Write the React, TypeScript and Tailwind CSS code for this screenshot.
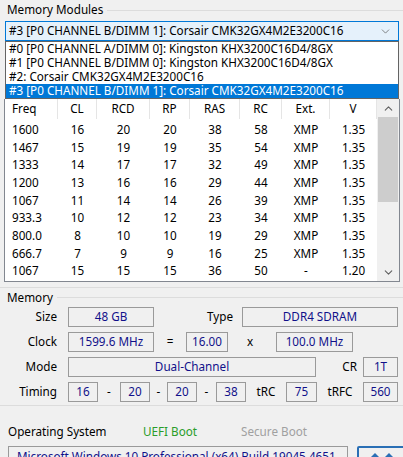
import { ChevronDown, ChevronUp } from 'lucide-react';

const modules = [
  '#0 [P0 CHANNEL A/DIMM 0]: Kingston KHX3200C16D4/8GX',
  '#1 [P0 CHANNEL B/DIMM 0]: Kingston KHX3200C16D4/8GX',
  '#2: Corsair CMK32GX4M2E3200C16',
  '#3 [P0 CHANNEL B/DIMM 1]: Corsair CMK32GX4M2E3200C16',
];

const cols = [
  { name: 'Freq', w: 'w-[53px]', left: true },
  { name: 'CL', w: 'w-[39px]' },
  { name: 'RCD', w: 'w-[53px]' },
  { name: 'RP', w: 'w-[40px]' },
  { name: 'RAS', w: 'w-[50px]' },
  { name: 'RC', w: 'w-[42px]' },
  { name: 'Ext.', w: 'w-[48px]' },
  { name: 'V', w: 'w-[47px]' },
];

const rows = [
  ['1600', '16', '20', '20', '38', '58', 'XMP', '1.35'],
  ['1467', '15', '19', '19', '35', '54', 'XMP', '1.35'],
  ['1333', '14', '17', '17', '32', '49', 'XMP', '1.35'],
  ['1200', '13', '16', '16', '29', '44', 'XMP', '1.35'],
  ['1067', '11', '14', '14', '26', '39', 'XMP', '1.35'],
  ['933.3', '10', '12', '12', '23', '34', 'XMP', '1.35'],
  ['800.0', '8', '10', '10', '19', '29', 'XMP', '1.35'],
  ['666.7', '7', '9', '9', '16', '25', 'XMP', '1.35'],
  ['1067', '15', '15', '15', '36', '50', '-', '1.20'],
];

function Field({ w, children }: { w: string; children: React.ReactNode }) {
  return (
    <div className={`${w} h-[20px] shrink-0 border border-[#9a9a9a] flex items-center justify-center text-[#10108a]`}>
      {children}
    </div>
  );
}

function GroupTitle({ title, h }: { title: string; h: string }) {
  return (
    <div className={`flex items-center ${h} pl-[7px]`}>
      <span>{title}</span>
      <div className="ml-[4px] flex-1 h-px bg-[#dcdcdc]" />
    </div>
  );
}

export default function App() {
  return (
    <div className="w-[403px] h-[457px] overflow-hidden bg-[#f0f0f0] font-['Noto_Sans',sans-serif] text-[11.7px] text-black leading-none whitespace-nowrap">
      <div className="pt-[1px] h-[21px]">
        <GroupTitle title="Memory Modules" h="h-[18px]" />
      </div>

      {/* combo box with open list */}
      <div className="ml-[5px] w-[394px] h-[20px] border border-[#0078d7] bg-[#e5f1fb] flex items-center justify-between pl-[3px] pr-[6px]">
        <span>#3 [P0 CHANNEL B/DIMM 1]: Corsair CMK32GX4M2E3200C16</span>
        <ChevronDown size={13} strokeWidth={1.25} className="text-[#505050]" />
      </div>
      <div className="ml-[5px] w-[394px] border border-[#646464] bg-white">
        {modules.map((m, i) => (
          <div
            key={m}
            className={`h-[14px] flex items-center pl-[3px] ${i === 3 ? 'bg-[#0078d7] text-white' : ''}`}
          >
            {m}
          </div>
        ))}
      </div>

      {/* timings list */}
      <div className="ml-[4px] w-[396px] h-[183px] border border-t-0 border-[#828790] bg-white flex">
        <div className="w-[372px]">
          <div className="flex h-[20px]">
            {cols.map((c) => (
              <div
                key={c.name}
                className={`${c.w} h-full border-r border-[#e5e5e5] flex items-center ${c.left ? 'pl-[7px]' : 'justify-center'}`}
              >
                {c.name}
              </div>
            ))}
          </div>
          <div className="pt-[2px]">
            {rows.map((r, ri) => (
              <div key={ri} className="flex h-[17.67px] items-center">
                {r.map((v, ci) => (
                  <div
                    key={ci}
                    className={`${cols[ci].w} flex ${ci === 0 ? 'pl-[7px]' : 'justify-center'}`}
                  >
                    {v}
                  </div>
                ))}
              </div>
            ))}
          </div>
        </div>
        <div className="w-[22px] bg-[#f0f0f0] flex flex-col">
          <div className="h-[18px] flex items-center justify-center">
            <ChevronUp size={13} strokeWidth={2} className="text-[#606060]" />
          </div>
          <div className="mx-[1px] h-[85px] bg-[#cdcdcd]" />
          <div className="flex-1" />
          <div className="h-[18px] flex items-center justify-center">
            <ChevronDown size={13} strokeWidth={2} className="text-[#606060]" />
          </div>
        </div>
      </div>

      <div className="mt-[5px] h-px bg-[#dcdcdc]" />

      <GroupTitle title="Memory" h="h-[19px]" />

      <div className="flex flex-col gap-[5px]">
        <div className="flex items-center">
          <div className="w-[57px] text-right">Size</div>
          <div className="w-[11px]" />
          <Field w="w-[86px]">48 GB</Field>
          <div className="w-[88px] text-right pr-[9px]">Type</div>
          <Field w="w-[156px]">DDR4 SDRAM</Field>
        </div>
        <div className="flex items-center">
          <div className="w-[57px] text-right">Clock</div>
          <div className="w-[11px]" />
          <Field w="w-[86px]">1599.6 MHz</Field>
          <div className="w-[32px] text-center">=</div>
          <Field w="w-[42px]">16.00</Field>
          <div className="w-[48px] text-center pr-[4px]">x</div>
          <Field w="w-[77px]">100.0 MHz</Field>
        </div>
        <div className="flex items-center">
          <div className="w-[57px] text-right">Mode</div>
          <div className="w-[11px]" />
          <Field w="w-[248px]">Dual-Channel</Field>
          <div className="w-[47px] text-right pr-[6px]">CR</div>
          <Field w="w-[35px]">1T</Field>
        </div>
        <div className="flex items-center">
          <div className="w-[57px] text-right">Timing</div>
          <div className="w-[11px]" />
          <Field w="w-[30px]">16</Field>
          <div className="w-[22px] text-center">-</div>
          <Field w="w-[30px]">20</Field>
          <div className="w-[17px] text-center">-</div>
          <Field w="w-[30px]">20</Field>
          <div className="w-[19px] text-center">-</div>
          <Field w="w-[30px]">38</Field>
          <div className="w-[40px] text-center">tRC</div>
          <Field w="w-[31px]">75</Field>
          <div className="w-[46px] text-center">tRFC</div>
          <Field w="w-[35px]">560</Field>
        </div>
      </div>

      <div className="mt-[3px] h-px bg-[#dcdcdc]" />

      <div className="mt-[16px] h-[20px] flex items-center pl-[8px]">
        <span className="w-[135px]">Operating System</span>
        <span className="w-[98px] text-[#2a9d2a]">UEFI Boot</span>
        <span className="text-[#a0a0a0]">Secure Boot</span>
      </div>

      <div className="mt-[4px] flex pl-[8px]">
        <div className="w-[340px] h-[22px] shrink-0 border border-[#9a9a9a] flex items-center pl-[8px] text-[#10108a] overflow-hidden">
          Microsoft Windows 10 Professional (x64) Build 19045.4651
        </div>
        <div className="ml-[9px] w-[50px] h-[22px] shrink-0 border-2 border-[#2a6fb5] rounded-[2px] flex items-start justify-center pt-[3px]">
          <svg width="34" height="10" viewBox="0 0 34 10">
            <path d="M3 9 L10 2 L17 9 Z" fill="#2a6fb5" />
            <path d="M17 9 L24 2 L31 9 Z" fill="#2a6fb5" />
          </svg>
        </div>
      </div>
    </div>
  );
}
